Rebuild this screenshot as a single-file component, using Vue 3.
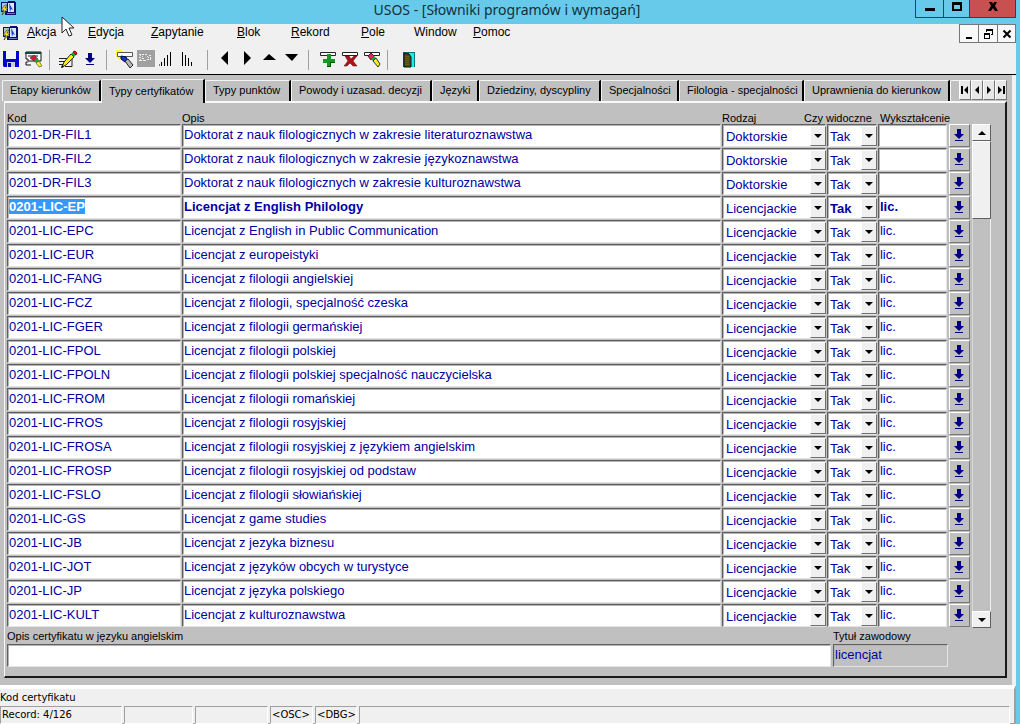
<script setup>
import { onMounted, ref } from 'vue'

const menu = [
  ['A', 'kcja'], ['E', 'dycja'], ['Z', 'apytanie'], ['B', 'lok'],
  ['R', 'ekord'], ['P', 'ole'], ['', 'Window'], ['P', 'omoc'],
]

const tabs = [
  'Etapy kierunków', 'Typy certyfikatów', 'Typy punktów', 'Powody i uzasad. decyzji',
  'Języki', 'Dziedziny, dyscypliny', 'Specjalności', 'Filologia - specjalności',
  'Uprawnienia do kierunkow',
]
const activeTab = ref(1)

const navButtons = [
  { label: 'Pierwsza zakładka', d: 'M1 2h2v8H1zM8 2v8L4 6z' },
  { label: 'Poprzednia zakładka', d: 'M7 2v8L3 6z' },
  { label: 'Następna zakładka', d: 'M3 2v8l4-4z' },
  { label: 'Ostatnia zakładka', d: 'M2 2v8l4-4zM7 2h2v8H7z' },
]

const row = (kod, opis, rodzaj = 'Licencjackie', wyk = 'lic.') => ({ kod, opis, rodzaj, widoczne: 'Tak', wyk })
const rows = ref([
  row('0201-DR-FIL1', 'Doktorat z nauk filologicznych w zakresie literaturoznawstwa', 'Doktorskie', ''),
  row('0201-DR-FIL2', 'Doktorat z nauk filologicznych w zakresie językoznawstwa', 'Doktorskie', ''),
  row('0201-DR-FIL3', 'Doktorat z nauk filologicznych w zakresie kulturoznawstwa', 'Doktorskie', ''),
  row('0201-LIC-EP', 'Licencjat z English Philology'),
  row('0201-LIC-EPC', 'Licencjat z English in Public Communication'),
  row('0201-LIC-EUR', 'Licencjat z europeistyki'),
  row('0201-LIC-FANG', 'Licencjat z filologii angielskiej'),
  row('0201-LIC-FCZ', 'Licencjat z filologii, specjalność czeska'),
  row('0201-LIC-FGER', 'Licencjat z filologii germańskiej'),
  row('0201-LIC-FPOL', 'Licencjat z filologii polskiej'),
  row('0201-LIC-FPOLN', 'Licencjat z filologii polskiej specjalność nauczycielska'),
  row('0201-LIC-FROM', 'Licencjat z filologii romańskiej'),
  row('0201-LIC-FROS', 'Licencjat z filologii rosyjskiej'),
  row('0201-LIC-FROSA', 'Licencjat z filologii rosyjskiej z językiem angielskim'),
  row('0201-LIC-FROSP', 'Licencjat z filologii rosyjskiej od podstaw'),
  row('0201-LIC-FSLO', 'Licencjat z filologii słowiańskiej'),
  row('0201-LIC-GS', 'Licencjat z game studies'),
  row('0201-LIC-JB', 'Licencjat z jezyka biznesu'),
  row('0201-LIC-JOT', 'Licencjat z języków obcych w turystyce'),
  row('0201-LIC-JP', 'Licencjat z języka polskiego'),
  row('0201-LIC-KULT', 'Licencjat z kulturoznawstwa'),
])
const current = 3
const opisAng = ref('')
const tytul = ref('licencjat')
const table = ref(null)

onMounted(() => {
  const field = table.value.querySelector('.current .kod')
  field.focus({ preventScroll: true })
  field.select()
})
</script>

<template>
  <div class="window">
    <header class="titlebar">
      <svg class="app-icon" width="17" height="16" viewBox="0 0 17 16" aria-hidden="true">
        <path d="M1 2h7V1h7v1h1v13H5v-3H1z" fill="#0a1066" />
        <path d="M2 3h5v8H2z" fill="#a8c4e8" /><path d="M8 3h6v9H8z" fill="#dbe7ff" />
        <path d="M9 3l4 7-2-1-1 3z" fill="#1739d8" /><path d="M7 13h8v1H7z" fill="#6080c0" />
        <path d="M5 5L1 10h3l-2 5 6-7H5l2-3z" fill="#f5e320" stroke="#222" stroke-width=".6" />
      </svg>
      <h1>USOS - [Słowniki programów i wymagań]</h1>
      <div class="win-buttons">
        <button aria-label="Minimalizuj"><svg width="12" height="14" viewBox="0 0 12 14"><path d="M1 8h10v3H1z" /></svg></button>
        <button aria-label="Maksymalizuj"><svg width="12" height="14" viewBox="0 0 12 14"><path d="M1 2h10v9H1zM3 5v4h6V5z" fill-rule="evenodd" /></svg></button>
        <button class="close" aria-label="Zamknij"><svg width="12" height="14" viewBox="0 0 12 14"><path d="M2 2h3l1 2 1-2h3L8 6l3 5H8L6 8l-2 3H1l3-5z" /></svg></button>
      </div>
    </header>

    <div class="client">
      <nav class="menubar">
        <svg class="app-icon" width="17" height="16" viewBox="0 0 17 16" aria-hidden="true">
          <path d="M1 2h7V1h7v1h1v13H5v-3H1z" fill="#0a1066" />
          <path d="M2 3h5v8H2z" fill="#a8c4e8" /><path d="M8 3h6v9H8z" fill="#dbe7ff" />
          <path d="M9 3l4 7-2-1-1 3z" fill="#1739d8" /><path d="M7 13h8v1H7z" fill="#6080c0" />
          <path d="M5 5L1 10h3l-2 5 6-7H5l2-3z" fill="#f5e320" stroke="#222" stroke-width=".6" />
        </svg>
        <div class="menu-items">
          <button v-for="m in menu" :key="m.join('')"><u>{{ m[0] }}</u>{{ m[1] }}</button>
        </div>
        <div class="mdi-buttons">
          <button aria-label="Minimalizuj okno"><svg width="12" height="12" viewBox="0 0 12 12"><path d="M3 9h6v2H3z" /></svg></button>
          <button aria-label="Przywróć okno"><svg width="12" height="12" viewBox="0 0 12 12"><path d="M4 1h7v6H9V6h1V3H5v1H4zM2 5h6v6H2zm1 2v3h4V7z" fill-rule="evenodd" /></svg></button>
          <button aria-label="Zamknij okno"><svg width="12" height="12" viewBox="0 0 12 12"><path d="M2.500 2.500l7 7m0-7l-7 7" stroke="#000" stroke-width="2" /></svg></button>
        </div>
      </nav>

      <div class="toolbar">
        <button aria-label="Zapisz">
          <svg width="22" height="20" viewBox="0 0 22 20"><path d="M3 1h16v16H4l-1-1z" fill="#0000d0" /><path d="M6 1h10v8H6z" fill="#f4f4f4" /><path d="M7 12h8v5H7z" fill="#cfcfcf" /><path d="M8 13h3v4H8z" fill="#0000a0" /></svg>
        </button>
        <button aria-label="Drukuj">
          <svg width="22" height="20" viewBox="0 0 22 20"><path d="M4 2h15v9H6V9H4z" fill="#fff" stroke="#111" /><path d="M3 2h16v2H3z" fill="#0a4a44" /><path d="M6 6h10M6 12H4v3h5" fill="none" stroke="#111" /><path d="M8 8l4-3 4 4-3 3z" fill="#d01840" stroke="#222" stroke-width=".5" /><path d="M12 11l3-3 2 2-3 3z" fill="#259b35" /><path d="M14 13l3-2 3 5-3 1z" fill="#f5ee20" stroke="#222" stroke-width=".5" /></svg>
        </button>
        <span class="sep"></span>
        <button aria-label="Edytuj">
          <svg width="22" height="20" viewBox="0 0 22 20"><path d="M2 8.500h11M2 11.500h8M2 14.500h6M8 16.500h7v-8" fill="none" stroke="#222" /><path d="M5 17l2-5 7-8 3 3-8 8z" fill="#f5ee20" stroke="#222" /><path d="M14 4l2-2 3 3-2 2z" fill="#259b35" /><path d="M16 2l2-1 2 2-1 2z" fill="#e02030" stroke="#900" /><path d="M4 18l1-3 2 2z" /></svg>
        </button>
        <button aria-label="Lista wartości">
          <svg width="22" height="20" viewBox="0 0 22 20"><path d="M9 3h4v5h3l-5 5-5-5h3zM7 14h8v1H7z" fill="#000080" /></svg>
        </button>
        <span class="sep"></span>
        <button aria-label="Wprowadź zapytanie">
          <svg width="22" height="20" viewBox="0 0 22 20"><path d="M2 0h6l3 4-5 6-4-3z" fill="#ffff30" /><path d="M3.500 2.500h15v4h-15z" fill="#fff" stroke="#555" /><path d="M7 6l5 1 2 4-3 1-4-3z" fill="#103cc0" stroke="#000060" /><path d="M11 11l3-2 5 6-3 3z" fill="#b8b8c0" stroke="#222" /></svg>
        </button>
        <button aria-label="Wykonaj zapytanie" disabled>
          <svg width="22" height="20" viewBox="0 0 22 20"><path d="M1 0h18v17H1z" fill="#a0a0a0" /><path d="M3 4h2v1H3zm3 0h2v1H6zm3 0h2v1H9zM4 5h1v1H4zm2 1h1v1H6zM3 7h2v1H3zm3 1h2v1H6zM4 9h1v1H4zm-1 1h3v1H3zm4 0h3v1H7zm4-4h1v1h-1zm2-1h2v1h-2zm-1 2h1v1h-1zm2 0h1v3h-1zm-3 2h2v1h-2z" fill="#f0f0f0" /></svg>
        </button>
        <button aria-label="Sortuj rosnąco">
          <svg width="22" height="20" viewBox="0 0 22 20"><path d="M3 12h1v4H3zM6 8h1v8H6zM9 5h1v11H9zM12 2h1v14h-1z" /><path d="M1 14h1v2H1z" fill="#777" /></svg>
        </button>
        <button aria-label="Sortuj malejąco">
          <svg width="22" height="20" viewBox="0 0 22 20"><path d="M2 2h1v14H2zM5 5h1v11H5zM8 8h1v8H8zM11 12h1v4h-1z" /></svg>
        </button>
        <span class="sep"></span>
        <button aria-label="Poprzedni blok"><svg width="22" height="20" viewBox="0 0 22 20"><path d="M13 1v14L6 8z" /></svg></button>
        <button aria-label="Następny blok"><svg width="22" height="20" viewBox="0 0 22 20"><path d="M7 1v14l7-7z" /></svg></button>
        <button aria-label="Poprzedni rekord"><svg width="22" height="20" viewBox="0 0 22 20"><path d="M4 10l6-6 7 6z" /></svg></button>
        <button aria-label="Następny rekord"><svg width="22" height="20" viewBox="0 0 22 20"><path d="M4 4h13l-6 7z" /></svg></button>
        <span class="sep"></span>
        <button aria-label="Wstaw rekord">
          <svg width="22" height="20" viewBox="0 0 22 20"><path d="M4.500 2.500h15v3h-15z" fill="#fff" stroke="#222" /><path d="M11 4h4v5h4v4h-4v4h-4v-4H7V9h4z" fill="#129b20" /><path d="M14 16v-4h5v1h-4v4h-4v-1z" fill="#07520e" /></svg>
        </button>
        <button aria-label="Usuń rekord">
          <svg width="22" height="20" viewBox="0 0 22 20"><path d="M4.500 2.500h15v3h-15z" fill="#fff" stroke="#222" /><path d="M7 6h4l2 3 3-3h3l-4 5 4 5h-4l-3-3-3 3H6l4-5z" fill="#b01018" stroke="#50080c" stroke-width=".5" /></svg>
        </button>
        <button aria-label="Wyczyść rekord">
          <svg width="22" height="20" viewBox="0 0 22 20"><path d="M4.500 2.500h15v3h-15z" fill="#fff" stroke="#222" /><path d="M8 6l3-3 3 3-3 4z" fill="#e0285a" stroke="#60102a" /><path d="M11 9l3-3 2 2-2 4z" fill="#259b35" /><path d="M13 11l3-3 4 6-2 3z" fill="#f5ee20" stroke="#333" /></svg>
        </button>
        <span class="sep"></span>
        <button class="exit" aria-label="Wyjście">
          <svg width="22" height="20" viewBox="0 0 22 20"><path d="M5 2h12v15H5z" fill="#007878" /><path d="M11 3h5v14h-5z" fill="#20e8f0" /><path d="M6 3l5 1 2 3v10H6z" fill="#4a4a18" stroke="#111" /><path d="M8 6v10M10 6v10" stroke="#807828" stroke-dasharray="1 1" /></svg>
        </button>
      </div>

      <main class="workspace">
        <div class="tabs" role="tablist">
          <button v-for="(t, i) in tabs" :key="t" role="tab" class="tab" :class="{ active: i === activeTab }" :aria-selected="i === activeTab" @click="activeTab = i">{{ t }}</button>
          <span class="tab rest"></span>
          <div class="tab-nav">
            <button v-for="n in navButtons" :key="n.label" :aria-label="n.label"><svg width="10" height="12" viewBox="0 0 10 12"><path :d="n.d" /></svg></button>
          </div>
        </div>

        <section class="panel">
          <div class="grid">
            <table ref="table">
              <colgroup>
                <col class="c-kod"><col><col class="c-rodzaj"><col class="c-split"><col class="c-widoczne"><col class="c-wyk"><col class="c-lov">
              </colgroup>
              <thead>
                <tr><th>Kod</th><th>Opis</th><th>Rodzaj</th><th colspan="2">Czy widoczne</th><th class="th-wyk" colspan="2">Wykształcenie</th></tr>
              </thead>
              <tbody>
                <tr v-for="(r, i) in rows" :key="r.kod" :class="{ current: i === current }">
                  <td><input v-model="r.kod" class="field kod" aria-label="Kod"></td>
                  <td><input v-model="r.opis" class="field" aria-label="Opis"></td>
                  <td colspan="2">
                    <div class="combo rodzaj">
                      <select v-model="r.rodzaj" class="field" aria-label="Rodzaj"><option>Doktorskie</option><option>Licencjackie</option></select>
                      <span class="drop"><svg width="8" height="4" viewBox="0 0 8 4"><path d="M0 0h8L4 4z" /></svg></span>
                    </div>
                  </td>
                  <td>
                    <div class="combo">
                      <select v-model="r.widoczne" class="field" aria-label="Czy widoczne"><option>Tak</option><option>Nie</option></select>
                      <span class="drop"><svg width="8" height="4" viewBox="0 0 8 4"><path d="M0 0h8L4 4z" /></svg></span>
                    </div>
                  </td>
                  <td><input v-model="r.wyk" class="field wyk" aria-label="Wykształcenie"></td>
                  <td><button class="lov" aria-label="Lista wartości"><svg width="10" height="13" viewBox="0 0 10 13"><path d="M3 0h4v5h3L5 10 0 5h3zM1 11h8v1H1z" /></svg></button></td>
                </tr>
              </tbody>
            </table>
            <div class="scrollbar">
              <button aria-label="W górę"><svg width="8" height="4" viewBox="0 0 8 4"><path d="M0 4h8L4 0z" /></svg></button>
              <div class="thumb"></div>
              <div class="track"></div>
              <button aria-label="W dół"><svg width="8" height="4" viewBox="0 0 8 4"><path d="M0 0h8L4 4z" /></svg></button>
            </div>
          </div>

          <div class="details">
            <div class="detail">
              <label for="opis-ang">Opis certyfikatu w języku angielskim</label>
              <input id="opis-ang" v-model="opisAng" class="field">
            </div>
            <div class="detail title">
              <label for="tytul">Tytuł zawodowy</label>
              <input id="tytul" v-model="tytul" class="field" readonly>
            </div>
          </div>
        </section>
      </main>

      <footer class="status">
        <p>Kod certyfikatu</p>
        <div class="cells">
          <span>Record: 4/126</span><span></span><span></span><span>&lt;OSC&gt;</span><span>&lt;DBG&gt;</span><span></span>
        </div>
      </footer>
    </div>

    <svg class="pointer" width="16" height="22" viewBox="0 0 16 22" aria-hidden="true"><path d="M1 1v16l4-4 3 7 3-1-3-7h5z" fill="#fff" stroke="#222" /></svg>
  </div>
</template>

<style>
body {
  margin: 0;
  background: #68caea;
}
</style>

<style scoped>
* {
  box-sizing: border-box;
}

.window {
  position: relative;
  display: flex;
  flex-direction: column;
  min-height: 100vh;
  padding-right: 4px;
  background: #68caea;
  color: #000;
  font-family: "Liberation Sans", Arial, sans-serif;
  font-size: 12px;
}

button {
  display: flex;
  align-items: center;
  justify-content: center;
  margin: 0;
  padding: 0;
  border: 0;
  border-radius: 0;
  background: none;
  color: #000;
  font: inherit;
}

svg {
  display: block;
  flex: none;
}

.titlebar {
  display: grid;
  grid-template-columns: 100px 1fr 102px;
  height: 24px;
}

h1 {
  margin: 0;
  font: 14px/19px "Noto Sans", sans-serif;
  color: #12303c;
  text-align: center;
  white-space: nowrap;
}

.win-buttons {
  display: grid;
  grid-template-columns: 29px 26px 46px;
  justify-content: end;
  height: 15px;
}

.win-buttons button {
  align-items: flex-end;
  border: 1px solid #20465a;
  border-top: 0;
  border-left: 0;
  padding-bottom: 3px;
}

.win-buttons button:first-child {
  border-left: 1px solid #20465a;
}

.win-buttons .close {
  background: #c75050;
}

.client {
  display: flex;
  flex: 1;
  flex-direction: column;
  background: #f0f0f0;
}

.menubar {
  display: flex;
  height: 20px;
  padding-left: 2px;
}

.menubar .app-icon {
  margin-top: 1px;
}

.menu-items {
  display: grid;
  flex: 1;
  grid-template-columns: 61px 63px 86px 54px 70px 53px 59px 60px;
  padding-left: 8px;
}

.menu-items button {
  justify-content: flex-start;
  height: 16px;
}

.mdi-buttons {
  display: flex;
  height: 19px;
}

.mdi-buttons button {
  width: 19px;
  border: 1px solid #777;
  border-right-width: 0;
  background: #f8f8f8;
}

.mdi-buttons button:last-child {
  border-right-width: 1px;
}

.toolbar {
  display: flex;
  height: 31px;
  padding-top: 6px;
  border-bottom: 1px solid #000;
}

.toolbar button {
  width: 22px;
  height: 20px;
}

.toolbar .exit {
  margin-left: 3px;
}

.sep {
  width: 1px;
  height: 20px;
  margin: 0 7px 0 5px;
  background: #a0a0a0;
}

.workspace {
  flex: 1;
  margin-right: 4px;
  padding: 4px 5px 7px 2px;
  background: #c0c0c0;
}

.tabs {
  display: grid;
  grid-template-columns: 99px 104px 86px 141px 47px 122px 78px 125px 146px 1fr auto;
  height: 22px;
  font-size: 11px;
}

.tab {
  justify-content: flex-start;
  margin-top: 1px;
  padding: 0 0 2px 7px;
  border-top: 1px solid #f4f4f4;
  border-left: 1px solid #f4f4f4;
  border-right: 2px solid #000;
  border-top-left-radius: 2px;
  white-space: nowrap;
}

.tab.active {
  position: relative;
  z-index: 1;
  margin: 0 0 -2px;
  background: #c0c0c0;
}

.tab.rest {
  border-right: 0;
}

.tab-nav {
  display: grid;
  grid-template-columns: repeat(4, 12px);
  padding: 1px 0;
}

.tab-nav button {
  border: 1px solid;
  border-color: #fff #777 #777 #fff;
  background: #e8e8e8;
}

.panel {
  margin-left: 2px;
  padding: 9px 14px 9px 2px;
  border: 2px solid;
  border-color: #f8f8f8 #1a1a1a #1a1a1a #f8f8f8;
  border-left-width: 1px;
}

.grid {
  display: flex;
  gap: 2px;
}

table {
  flex: 1;
  width: 0;
  border-collapse: collapse;
  table-layout: fixed;
}

.c-kod { width: 175px; }
.c-rodzaj { width: 82px; }
.c-split { width: 23px; }
.c-widoczne { width: 51px; }
.c-wyk { width: 70px; }
.c-lov { width: 22px; }

th {
  height: 12px;
  padding: 0;
  font-size: 11px;
  font-weight: normal;
  line-height: 12px;
  text-align: left;
  white-space: nowrap;
}

.th-wyk {
  padding-left: 2px;
}

td {
  height: 24px;
  padding: 0 1px 1px 0;
}

.field {
  display: block;
  width: 100%;
  height: 23px;
  margin: 0;
  padding: 1px 1px 4px;
  border: 1px solid;
  border-color: #606060 #e4e4e4 #e4e4e4 #606060;
  border-radius: 0;
  outline: 0;
  background: #fff;
  box-shadow: inset 1px 1px #b4b4b4;
  color: #0000a0;
  font: 13px/16px "Liberation Sans", Arial, sans-serif;
}

.field::selection {
  background: #3399ff;
  color: #fff;
}

.current .field {
  font-weight: bold;
}

.current .rodzaj .field {
  font-weight: normal;
}

.combo {
  position: relative;
}

.combo .field {
  appearance: none;
  padding: 3px 0 0 2px;
}

.combo.rodzaj .field {
  padding-left: 3px;
}

.drop {
  position: absolute;
  top: 2px;
  right: 0;
  bottom: 1px;
  display: flex;
  align-items: center;
  justify-content: center;
  width: 16px;
  border: 1px solid;
  border-color: #fff #707070 #707070 #fff;
  background: #f0f0f0;
  pointer-events: none;
}

.lov {
  width: 21px;
  height: 23px;
  margin-left: 1px;
  border: 1px solid;
  border-color: #fff #777 #777 #fff;
  background: #c0c0c0;
}

.lov svg {
  fill: #000080;
}

.scrollbar {
  display: flex;
  flex-direction: column;
  width: 19px;
  padding-top: 12px;
}

.scrollbar button,
.thumb {
  height: 17px;
  border: 1px solid;
  border-color: #fff #606060 #606060 #fff;
  background: #f0f0f0;
}

.thumb {
  height: 78px;
}

.track {
  flex: 1;
  border-left: 1px solid #d8d8d8;
  border-right: 1px solid #f0f0f0;
  background: #c0c0c0;
}

.details {
  display: flex;
  gap: 2px;
  padding: 2px 43px 0 0;
}

.detail {
  flex: 1;
}

.detail.title {
  flex: 0 0 115px;
}

.detail label {
  display: block;
  height: 14px;
  font-size: 11px;
  line-height: 13px;
}

.title .field {
  background: #c0c0c0;
}

.status {
  height: 40px;
  border-top: 4px solid #fff;
  border-right: 2px solid #a0a0a0;
  border-bottom: 2px solid #a0a0a0;
  font: 10px/18px "DejaVu Sans", sans-serif;
}

.status p {
  height: 17px;
  margin: 0;
}

.cells {
  display: grid;
  grid-template-columns: 122px 69px 73px 43px 42px 1fr;
  gap: 2px;
  height: 17px;
  padding-right: 4px;
}

.cells span {
  padding-left: 1px;
  border: 1px solid;
  border-color: #a0a0a0 #fff #fff #a0a0a0;
  line-height: 16px;
  white-space: nowrap;
}

.pointer {
  position: absolute;
  top: 16px;
  left: 61px;
  pointer-events: none;
}
</style>
